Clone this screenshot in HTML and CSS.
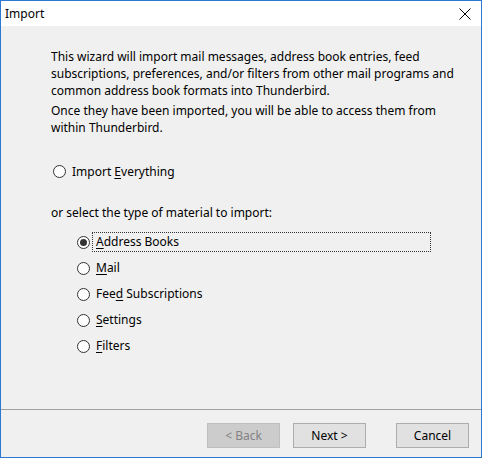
FILE: index.html
```html
<!DOCTYPE html>
<html>
<head>
<meta charset="utf-8">
<link rel="stylesheet" href="styles.css">
</head>
<body>
<div class="window">
  <div class="titlebar">
    <span class="title">Import</span>
    <span class="close">
      <svg width="12" height="12" viewBox="0 0 12 12"><path d="M0.5 0.5 L11.5 11.5 M11.5 0.5 L0.5 11.5" stroke="#000" stroke-width="1" fill="none"/></svg>
    </span>
  </div>
  <div class="content">
    <p class="intro">This wizard will import mail messages, address book entries, feed<br>subscriptions, preferences, and/or filters from other mail programs and<br>common address book formats into Thunderbird.</p>
    <p class="intro second">Once they have been imported, you will be able to access them from<br>within Thunderbird.</p>
    <div class="radio-row everything">
      <span class="radio"></span>
      <span class="label">Import <u>E</u>verything</span>
    </div>
    <p class="select-text">or select the type of material to import:</p>
    <div class="list">
      <div class="radio-row item">
        <span class="radio checked"></span>
        <span class="label focused"><u>A</u>ddress Books</span>
      </div>
      <div class="radio-row item">
        <span class="radio"></span>
        <span class="label"><u>M</u>ail</span>
      </div>
      <div class="radio-row item">
        <span class="radio"></span>
        <span class="label">Fee<u>d</u> Subscriptions</span>
      </div>
      <div class="radio-row item">
        <span class="radio"></span>
        <span class="label"><u>S</u>ettings</span>
      </div>
      <div class="radio-row item">
        <span class="radio"></span>
        <span class="label"><u>F</u>ilters</span>
      </div>
    </div>
  </div>
  <div class="footer">
    <button class="btn disabled">&lt; Back</button>
    <button class="btn next">Next &gt;</button>
    <button class="btn cancel">Cancel</button>
  </div>
</div>
</body>
</html>
```
FILE: styles.css
```css
html, body {
  margin: 0;
  padding: 0;
}
body {
  font-family: "Noto Sans", "Open Sans", sans-serif;
  font-size: 12px;
  color: #000;
}
.window {
  width: 482px;
  height: 458px;
  box-sizing: border-box;
  border: 1px solid #2b79d4;
  display: flex;
  flex-direction: column;
  background: #f0f0f0;
}
.titlebar {
  height: 25px;
  flex: none;
  background: #fff;
  display: flex;
  align-items: center;
  justify-content: space-between;
  padding: 0 10px 0 4px;
}
.title {
  line-height: 17px;
  margin-top: -1px;
}
.close {
  display: flex;
  width: 12px;
  height: 12px;
}
.content {
  flex: 1;
  padding: 22px 0 0 50px;
}
.intro {
  margin: 0;
  line-height: 17px;
}
.intro.second {
  margin-top: 4px;
  line-height: 16.5px;
}
.radio-row {
  display: flex;
  align-items: center;
}
.everything {
  margin-top: 27px;
  margin-left: 2px;
  height: 17px;
}
.everything .label {
  margin-left: 6px;
}
.select-text {
  margin: 24px 0 0 0;
  line-height: 17px;
}
.list {
  margin-top: 11px;
  margin-left: 26px;
  display: flex;
  flex-direction: column;
  gap: 6px;
}
.item {
  height: 20px;
}
.item .label {
  margin-left: 2px;
  width: 334px;
  height: 18px;
  line-height: 18px;
  padding-left: 3px;
  border: 1px dotted transparent;
}
.item .label.focused {
  border-color: #333;
}
.radio {
  width: 13px;
  height: 13px;
  box-sizing: border-box;
  border: 1px solid #333;
  border-radius: 50%;
  background: #fff;
  display: flex;
  align-items: center;
  justify-content: center;
  flex: none;
}
.radio.checked::after {
  content: "";
  width: 7px;
  height: 7px;
  border-radius: 50%;
  background: #333;
}
u {
  text-decoration: underline;
  text-underline-offset: 2px;
}
.footer {
  flex: none;
  height: 48px;
  box-sizing: border-box;
  border-top: 1px solid #a0a0a0;
  display: flex;
  align-items: flex-start;
  padding: 13px 0 0 206px;
}
.btn {
  width: 73px;
  height: 25px;
  box-sizing: border-box;
  border: 1px solid #adadad;
  background: #e1e1e1;
  font-family: "Noto Sans", "Open Sans", sans-serif;
  font-size: 12px;
  color: #000;
  padding: 0;
  margin: 0;
}
.btn.disabled {
  background: #cccccc;
  border-color: #bfbfbf;
  color: #838383;
}
.btn.next {
  margin-left: 13px;
}
.btn.cancel {
  margin-left: 30px;
}
```
